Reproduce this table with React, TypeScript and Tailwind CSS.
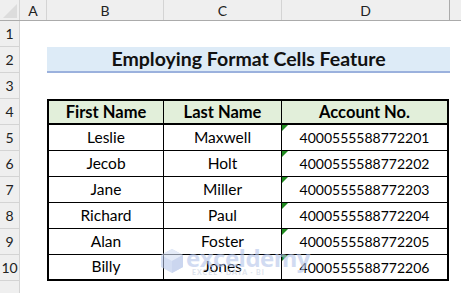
import React from "react";

const rows = [
  { first: "Leslie", last: "Maxwell", acc: "4000555588772201" },
  { first: "Jecob", last: "Holt", acc: "4000555588772202" },
  { first: "Jane", last: "Miller", acc: "4000555588772203" },
  { first: "Richard", last: "Paul", acc: "4000555588772204" },
  { first: "Alan", last: "Foster", acc: "4000555588772205" },
  { first: "Billy", last: "Jones", acc: "4000555588772206" },
];

const font = { fontFamily: "Lato, 'Open Sans', sans-serif" };

function RowHead({ n }: { n?: number }) {
  return (
    <div className="w-[20px] shrink-0 bg-[#efefef] border-r border-b border-[#d4d4d4] flex items-center justify-center text-[14px] text-[#222]">
      {n}
    </div>
  );
}

export default function App() {
  return (
    <div className="relative w-[461px] h-[293px] overflow-hidden bg-white text-black" style={font}>
      {/* column headers */}
      <div className="flex h-[21px] bg-[#efefef] border-b border-[#ababab] text-[14px] text-[#222]">
        <div className="w-[20px] shrink-0 border-r border-[#d4d4d4] relative">
          <div className="absolute right-[2px] bottom-[2px] w-0 h-0 border-l-[14px] border-l-transparent border-b-[14px] border-b-[#dcdcdc]" />
        </div>
        <div className="w-[27px] shrink-0 border-r border-[#d4d4d4] flex items-center justify-center">A</div>
        <div className="w-[117px] shrink-0 border-r border-[#d4d4d4] flex items-center justify-center">B</div>
        <div className="w-[118px] shrink-0 border-r border-[#d4d4d4] flex items-center justify-center">C</div>
        <div className="w-[168px] shrink-0 border-r border-[#ababab] flex items-center justify-center">D</div>
        <div className="flex-1" />
      </div>

      {/* row 1 */}
      <div className="flex h-[26px]">
        <RowHead n={1} />
      </div>
      {/* row 2 title */}
      <div className="flex h-[26px]">
        <RowHead n={2} />
        <div className="w-[27px] shrink-0" />
        <div className="w-[403px] shrink-0 bg-[#ddebf7] border-b-2 border-[#9bb1dd] flex items-center justify-center text-[19.5px] font-bold text-[#111]">
          Employing Format Cells Feature
        </div>
      </div>
      {/* row 3 */}
      <div className="flex h-[26px]">
        <RowHead n={3} />
      </div>
      {/* row 4 header */}
      <div className="flex h-[26px]">
        <RowHead n={4} />
        <div className="w-[27px] shrink-0" />
        <div className="w-[117px] shrink-0 bg-[#e2efda] border-2 border-black border-r flex items-center justify-center text-[16.5px] font-bold">First Name</div>
        <div className="w-[118px] shrink-0 bg-[#e2efda] border-t-2 border-b-2 border-r border-black flex items-center justify-center text-[16.5px] font-bold">Last Name</div>
        <div className="w-[167px] shrink-0 bg-[#e2efda] border-t-2 border-b-2 border-r-2 border-black flex items-center justify-center text-[16.5px] font-bold">Account No.</div>
      </div>
      {rows.map((r, i) => (
        <div key={r.acc} className="flex h-[26px]">
          <RowHead n={5 + i} />
          <div className="w-[27px] shrink-0" />
          <div className={`w-[117px] shrink-0 border-l-2 border-r border-black flex items-center justify-center text-[15.5px] ${i === rows.length - 1 ? "border-b-2" : "border-b"}`}>{r.first}</div>
          <div className={`w-[118px] shrink-0 border-r border-black flex items-center justify-center text-[15.5px] ${i === rows.length - 1 ? "border-b-2" : "border-b"}`}>{r.last}</div>
          <div className={`relative w-[167px] shrink-0 border-r-2 border-black flex items-center justify-center text-[14px] ${i === rows.length - 1 ? "border-b-2" : "border-b"}`}>
            <div className="absolute left-0 top-0 w-0 h-0 border-t-[6px] border-t-[#1f8a1f] border-r-[6px] border-r-transparent" />
            {r.acc}
          </div>
        </div>
      ))}
      {/* row 11 */}
      <div className="flex h-[26px]">
        <RowHead />
      </div>

      {/* watermark */}
      <div className="absolute left-[160px] top-[246px] flex items-center gap-[2px] opacity-60 pointer-events-none">
        <svg width="24" height="26" viewBox="0 0 24 26">
          <polygon points="12,1 23,7 23,19 12,25 1,19 1,7" fill="#b9c9ec" />
          <polygon points="12,1 23,7 12,13 1,7" fill="#d3def4" />
          <polygon points="12,13 23,7 23,19 12,25" fill="#a9bce6" />
        </svg>
        <div className="flex flex-col leading-none">
          <span className="text-[24px] font-bold text-[#b3c4ea] tracking-[-0.5px]" style={{ fontFamily: "'Open Sans', sans-serif" }}>exceldemy</span>
          <span className="text-[7px] font-bold text-[#c5cfe0] tracking-[1px] ml-[6px] -mt-[1px]">EXCEL · DATA · BI</span>
        </div>
      </div>
    </div>
  );
}
